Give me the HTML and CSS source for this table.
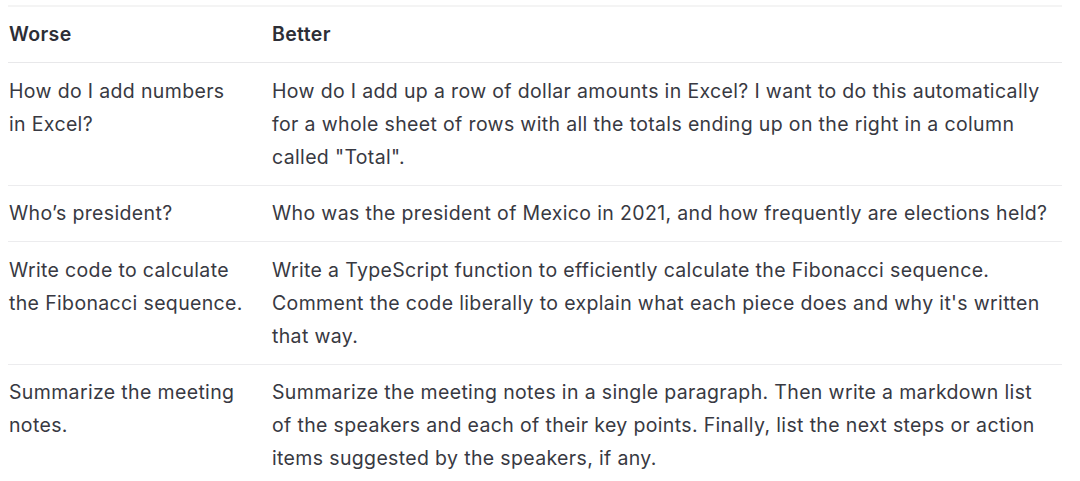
FILE: index.html
```html
<!DOCTYPE html>
<html lang="en">
<head>
<meta charset="utf-8">
<link rel="stylesheet" href="styles.css">
</head>
<body>
<div class="wrap">
<table class="prompts">
  <thead>
    <tr><th class="c1">Worse</th><th class="c2">Better</th></tr>
  </thead>
  <tbody>
    <tr>
      <td class="c1">How do I add numbers in Excel?</td>
      <td class="c2">How do I add up a row of dollar amounts in Excel? I want to do this automatically for a whole sheet of rows with all the totals ending up on the right in a column called "Total".</td>
    </tr>
    <tr>
      <td class="c1">Who’s president?</td>
      <td class="c2">Who was the president of Mexico in 2021, and how frequently are elections held?</td>
    </tr>
    <tr>
      <td class="c1">Write code to calculate the Fibonacci sequence.</td>
      <td class="c2">Write a TypeScript function to efficiently calculate the Fibonacci sequence. Comment the code liberally to explain what each piece does and why it's written that way.</td>
    </tr>
    <tr>
      <td class="c1">Summarize the meeting notes.</td>
      <td class="c2">Summarize the meeting notes in a single paragraph. Then write a markdown list of the speakers and each of their key points. Finally, list the next steps or action items suggested by the speakers, if any.</td>
    </tr>
  </tbody>
</table>
</div>
</body>
</html>
```
FILE: styles.css
```css
html, body {
  margin: 0;
  padding: 0;
  background: #ffffff;
}
.wrap {
  padding: 5px 18px 0 8px;
}
.prompts {
  width: 1054px;
  table-layout: fixed;
  border-collapse: collapse;
  border-top: 2px solid #f4f4f4;
  font-family: Inter, "Noto Sans", sans-serif;
  font-size: 19.5px;
  line-height: 33px;
  color: #383942;
  letter-spacing: 0.35px;
}
.prompts th {
  text-align: left;
  font-weight: 600;
  color: #2d2e36;
  padding: 11px 8px 11px 0;
  border-bottom: 1px solid #e8e8ea;
}
.prompts td {
  vertical-align: top;
  padding: 11.5px 8px 11px 0;
  border-bottom: 1px solid #ececee;
}
.prompts .c1 {
  width: 236px;
  padding-left: 1px;
  padding-right: 27px;
}
.prompts .c2 {
  padding-left: 0;
}
```
